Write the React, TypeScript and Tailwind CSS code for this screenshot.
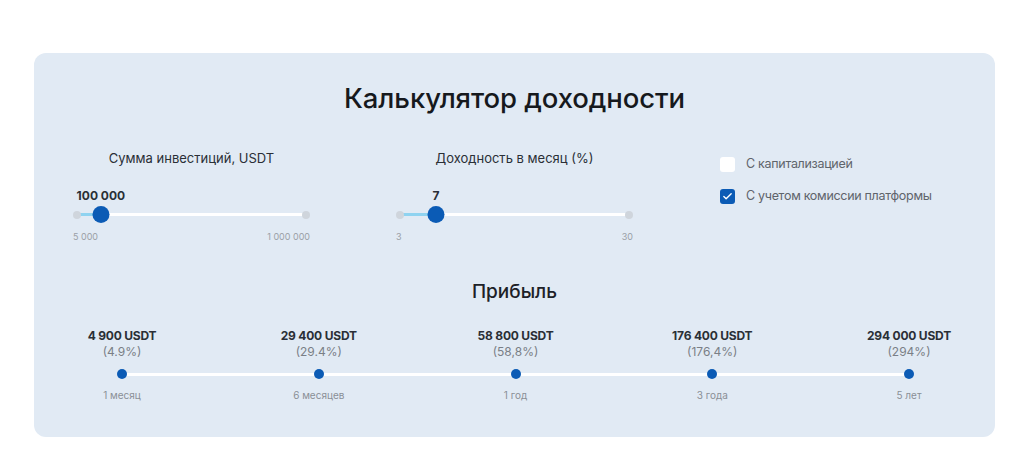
import React, { useState } from 'react';
import { Check } from 'lucide-react';

interface RangeProps {
  label: string;
  value: number;
  min: number;
  max: number;
  minText: string;
  maxText: string;
  valueText: string;
}

// span between the two end dots of the track, px
const TRACK_SPAN = 229;

const RangeField: React.FC<RangeProps> = ({ label, value, min, max, minText, maxText, valueText }) => {
  const pos = 6 + ((value - min) / (max - min)) * TRACK_SPAN;

  return (
    <div className="w-[237px] flex flex-col">
      <div className="text-[13px] leading-4 text-center text-[#2a2f36]">{label}</div>

      {/* current value, centred above the thumb */}
      <div className="relative h-4 mt-[22px]">
        <span
          className="absolute top-0 -translate-x-1/2 text-[12px] leading-4 font-bold text-[#2a2f36] whitespace-nowrap"
          style={{ left: pos }}
        >
          {valueText}
        </span>
      </div>

      <div className="relative h-[17px] mt-[2px]">
        <div className="absolute left-1 right-1 top-[7px] h-[3px] bg-white rounded-full" />
        <div className="absolute left-1 top-[7px] h-[3px] bg-[#8fd3f0]" style={{ width: pos - 4 }} />
        <div className="absolute left-0 top-[4.5px] w-2 h-2 rounded-full bg-[#cfd5dc]" />
        <div className="absolute right-0 top-[4.5px] w-2 h-2 rounded-full bg-[#cfd5dc]" />
        <div
          className="absolute top-0 w-[17px] h-[17px] -translate-x-1/2 rounded-full bg-[#0b5bb5]"
          style={{ left: pos }}
        />
      </div>

      <div className="flex justify-between mt-[8px] text-[9px] leading-3 text-[#9aa0a6]">
        <span>{minText}</span>
        <span>{maxText}</span>
      </div>
    </div>
  );
};

const CheckOption: React.FC<{ checked: boolean; label: string; onToggle: () => void }> = ({ checked, label, onToggle }) => (
  <button type="button" onClick={onToggle} className="flex items-center gap-[11px] h-4 text-left">
    <span
      className={
        checked
          ? 'w-[15px] h-[15px] rounded-[3px] bg-[#0b5bb5] flex items-center justify-center'
          : 'w-[15px] h-[15px] rounded-[3px] bg-white'
      }
    >
      {checked && <Check className="w-[11px] h-[11px] text-white" strokeWidth={3} />}
    </span>
    <span className="text-[12.5px] leading-4 text-[#5f646b] tracking-[-0.3px]">{label}</span>
  </button>
);

const periods = [
  { amount: '4 900 USDT', pct: '(4.9%)', term: '1 месяц' },
  { amount: '29 400 USDT', pct: '(29.4%)', term: '6 месяцев' },
  { amount: '58 800 USDT', pct: '(58,8%)', term: '1 год' },
  { amount: '176 400 USDT', pct: '(176,4%)', term: '3 года' },
  { amount: '294 000 USDT', pct: '(294%)', term: '5 лет' },
];

export default function App() {
  const [capitalize, setCapitalize] = useState(false);
  const [withFee, setWithFee] = useState(true);

  return (
    <div className="w-[1024px] h-[476px] bg-white pt-[53px] font-['Inter',sans-serif]">
      <div className="ml-[34px] w-[961px] h-[384px] rounded-[12px] bg-[#e1eaf4] pt-[29px] flex flex-col">
        <h1 className="text-[27.5px] leading-8 font-medium text-center text-[#16191d] tracking-[-0.1px]">
          Калькулятор доходности
        </h1>

        <div className="flex mt-9 pl-[39px]">
          <RangeField
            label="Сумма инвестиций, USDT"
            value={100000}
            min={5000}
            max={1000000}
            minText="5 000"
            maxText="1 000 000"
            valueText="100 000"
          />
          <div className="ml-[86px]">
            <RangeField
              label="Доходность в месяц (%)"
              value={7}
              min={3}
              max={30}
              minText="3"
              maxText="30"
              valueText="7"
            />
          </div>
          <div className="ml-[87px] pt-[6px] flex flex-col gap-4">
            <CheckOption checked={capitalize} label="С капитализацией" onToggle={() => setCapitalize(v => !v)} />
            <CheckOption checked={withFee} label="С учетом комиссии платформы" onToggle={() => setWithFee(v => !v)} />
          </div>
        </div>

        <h2 className="mt-[37px] text-[19px] leading-6 font-medium text-center text-[#1d2127]">Прибыль</h2>

        {/* timeline of profit per period */}
        <div className="relative mt-6 pl-[38px] pr-[36px] flex justify-between">
          <div className="absolute left-[88px] right-[86px] top-[45px] h-[3px] bg-white" />
          {periods.map(p => (
            <div key={p.term} className="relative w-[100px] flex flex-col items-center">
              <div className="text-[12px] leading-4 font-bold text-[#2a2f36] whitespace-nowrap tracking-[-0.2px]">{p.amount}</div>
              <div className="text-[12px] leading-4 text-[#7a7f86]">{p.pct}</div>
              <div className="mt-[9px] w-[10px] h-[10px] rounded-full bg-[#0b5bb5]" />
              <div className="mt-[9px] text-[10px] leading-[14px] text-[#8a8f96]">{p.term}</div>
            </div>
          ))}
        </div>
      </div>
    </div>
  );
}
